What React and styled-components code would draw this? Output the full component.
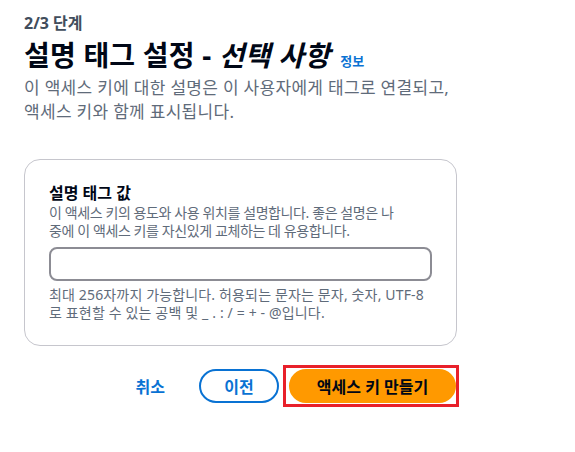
import React from 'react';
import styled, { createGlobalStyle } from 'styled-components';

const GlobalStyle = createGlobalStyle`
  body {
    margin: 0;
    background: #ffffff;
    font-family: "Noto Sans", "Noto Sans CJK KR", sans-serif;
    color: #000716;
  }
`;

const Page = styled.div`
  width: 433px;
  padding: 12px 0 0 24px;
`;

const Step = styled.div`
  font-size: 16px;
  line-height: 22px;
  font-weight: 700;
  color: #414d5c;
`;

const TitleRow = styled.div`
  display: flex;
  align-items: baseline;
  gap: 10px;
  margin-top: 3px;
`;

const Title = styled.h1`
  margin: 0;
  font-size: 28px;
  line-height: 36px;
  font-weight: 700;
  letter-spacing: 0.2px;
  color: #000716;

  em {
    font-style: italic;
  }
`;

const InfoLink = styled.a`
  font-size: 13px;
  font-weight: 700;
  color: #0972d3;
  text-decoration: none;
`;

const Description = styled.p`
  margin: 3px 0 0;
  font-size: 17px;
  line-height: 24px;
  letter-spacing: 0.3px;
  color: #5f6b7a;
  white-space: nowrap;
`;

const Card = styled.section`
  margin-top: 35px;
  border: 1px solid #c6c6cd;
  border-radius: 16px;
  padding: 22px 24px 24px;
`;

const FieldLabel = styled.label`
  display: block;
  font-size: 16px;
  line-height: 22px;
  font-weight: 700;
  color: #000716;
`;

const FieldHint = styled.div`
  font-size: 14px;
  line-height: ${props => props.$lh || 18}px;
  letter-spacing: ${props => props.$ls || 0}px;
  color: #5f6b7a;
  margin-top: ${props => props.$mt || 0}px;
  white-space: nowrap;
`;

const TextInput = styled.input`
  display: block;
  box-sizing: border-box;
  width: 100%;
  height: 34px;
  margin-top: 7px;
  border: 2px solid #8c8c94;
  border-radius: 8px;
  padding: 4px 12px;
  font: inherit;
  font-size: 14px;
  outline: none;
`;

const Actions = styled.div`
  display: flex;
  justify-content: flex-end;
  align-items: center;
  margin-top: 19px;
`;

const LinkButton = styled.button`
  background: none;
  border: none;
  padding: 4px 14px;
  margin-right: 20px;
  font: inherit;
  font-size: 16px;
  font-weight: 700;
  color: #0972d3;
  cursor: pointer;
`;

const PillButton = styled.button`
  box-sizing: border-box;
  height: 34px;
  width: ${props => props.$w}px;
  border-radius: 20px;
  font: inherit;
  font-size: 16px;
  font-weight: 700;
  cursor: pointer;
  border: 2px solid ${props => (props.$primary ? '#ff9900' : '#0972d3')};
  background: ${props => (props.$primary ? '#ff9900' : '#ffffff')};
  color: ${props => (props.$primary ? '#000716' : '#0972d3')};
`;

const Highlight = styled.span`
  display: inline-flex;
  margin-left: 4px;
  margin-right: -2px;
  border: 3px solid #e8202a;
  padding: 1px 0 1px 3px;
`;

export default function App() {
  return (
    <>
      <GlobalStyle />
      <Page>
        <Step>2/3 단계</Step>
        <TitleRow>
          <Title>
            설명 태그 설정 - <em>선택 사항</em>
          </Title>
          <InfoLink href="#">정보</InfoLink>
        </TitleRow>
        <Description>
          이 액세스 키에 대한 설명은 이 사용자에게 태그로 연결되고,
          <br />
          액세스 키와 함께 표시됩니다.
        </Description>
        <Card>
          <FieldLabel htmlFor="desc-tag">설명 태그 값</FieldLabel>
          <FieldHint $ls={-0.4}>
            이 액세스 키의 용도와 사용 위치를 설명합니다. 좋은 설명은 나
            <br />
            중에 이 액세스 키를 자신있게 교체하는 데 유용합니다.
          </FieldHint>
          <TextInput id="desc-tag" type="text" />
          <FieldHint $mt={5} $lh={17.5} $ls={0.15}>
            최대 256자까지 가능합니다. 허용되는 문자는 문자, 숫자, UTF-8
            <br />
            로 표현할 수 있는 공백 및 _ . : / = + - @입니다.
          </FieldHint>
        </Card>
        <Actions>
          <LinkButton>취소</LinkButton>
          <PillButton $w={80}>이전</PillButton>
          <Highlight>
            <PillButton $primary $w={167}>액세스 키 만들기</PillButton>
          </Highlight>
        </Actions>
      </Page>
    </>
  );
}
